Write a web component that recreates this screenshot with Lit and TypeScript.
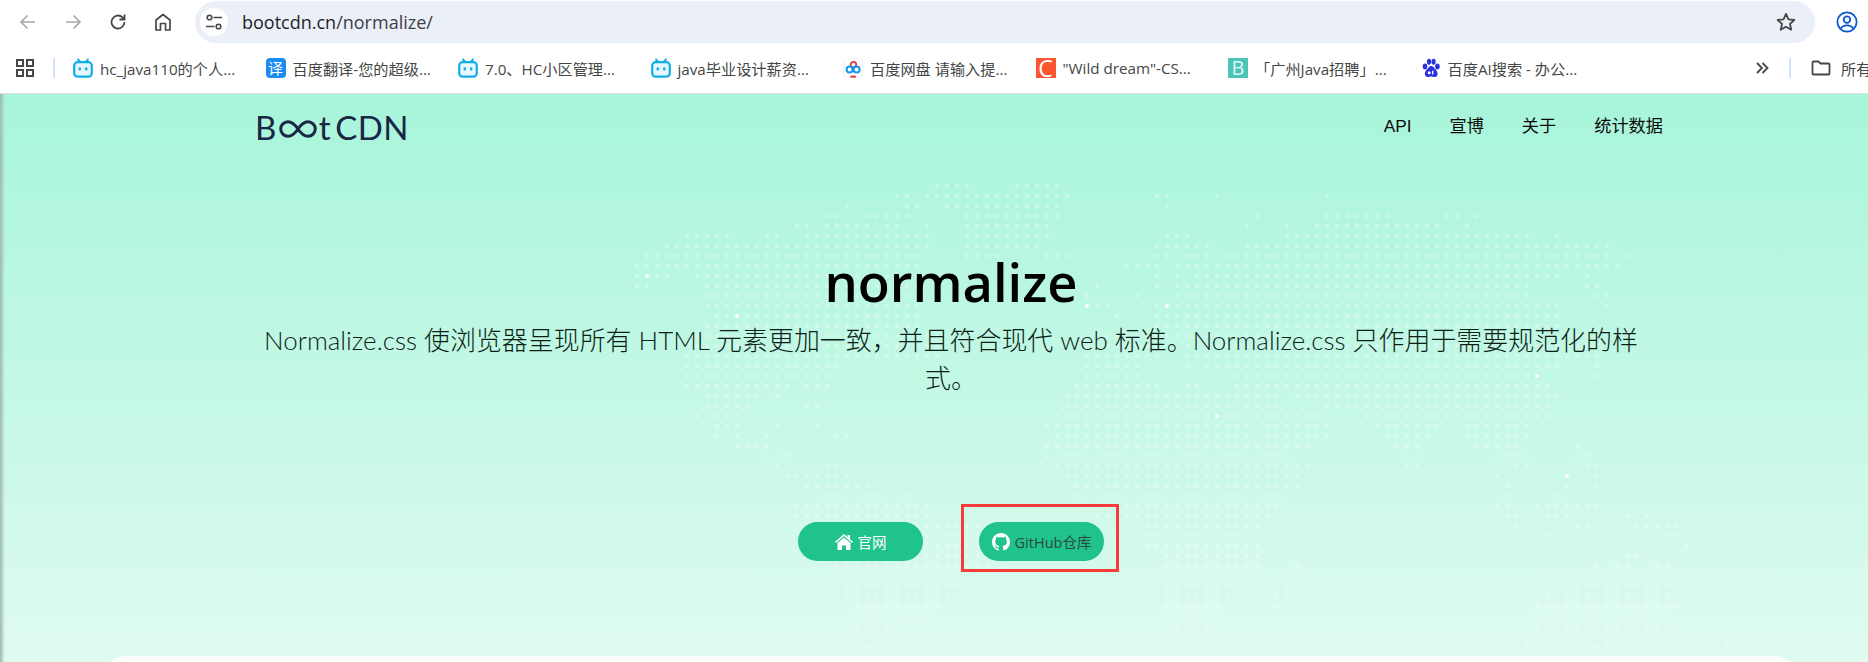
import { LitElement, html, css, svg } from "lit";
import { customElement } from "lit/decorators.js";

const MAP: string[] = [
  "937-967 1017-1057",
  "897-907 927-1067 1157-1167 1217 1327",
  "847 907-917 947-1057 1167",
  "827-837 867-907 967-1057 1257 1327-1387 1447-1457 1477",
  "797-807 827-847 857-867 887-897 927 967-1047 1247 1287 1317-1437 1467",
  "687-727 767-777 807-827 837-847 857-927 967-1047 1167-1187 1287-1527 1557",
  "667-927 967-1037 1157-1207 1247-1607",
  "647-917 967-997 1047-1067 1157-1167 1187-1207 1227-1607 1627",
  "637-917 1127-1157 1177-1617",
  "637-667 697-917 1157 1177 1197-1557 1587",
  "637-647 707-917 1097 1157 1177-1527 1587-1597",
  "707-917 1087 1137 1177-1527 1597-1607",
  "707-917 1087-1107 1157-1167 1177-1557 1607",
  "717-917 1117 1157-1557",
  "707-917 1157-1557",
  "697-937 1100-1597",
  "687-937 1087-1157 1187-1597",
  "687-937 1087-1157 1187-1597",
  "687-837 1087-1137 1187 1207-1557 1597",
  "687-827 1087-1137 1237-1537 1597",
  "687-787 807-827 1077-1157 1187-1197 1237-1547",
  "707-757 777 1067-1277 1297-1557",
  "707-747 807-817 1067-1227 1247-1277 1327-1547",
  "697 717-737 1057-1237 1257-1317 1367-1547",
  "717-737 777 817 1047-1247 1267-1327 1377-1437 1467-1527",
  "717 737 767 837-847 1057-1247 1267-1327 1387-1427 1467-1527",
  "737-767 1047-1307 1397-1417 1477-1517 1577",
  "767-787 1047-1287 1407-1417 1497-1527 1577-1587",
  "777 827-837 1057-1307 1407-1417 1517-1527 1587-1597",
  "787-847 1067-1297 1497 1567 1597",
  "807-867 1077-1297 1507 1567 1597",
  "817-907 1077-1287 1497-1507 1557-1567",
  "797-927 1087-1277 1497-1507 1537-1597",
  "797-927 1097-1267 1507-1517 1547-1567 1627 1647",
  "807-1037 1147-1257 1517 1577-1587 1637-1677",
  "817-1017 1147-1257 1527-1547 1657-1677",
  "817-1017 1147-1257 1687",
  "837-987 1167-1257 1627-1637",
  "837-987 1167-1257 1297 1597 1617-1627 1657-1667",
  "837-957 1167-1227 1287-1297 1587-1637 1657-1667",
  "847-957 1167-1227 1287 1577-1667",
  "847-947 1167-1227 1277-1287 1547-1667",
  "857-937 1167-1217 1277 1537-1677",
  "857-927 1167-1217 1537-1667",
  "857-887 1177-1207 1537-1667",
  "857-877 1177-1197 1527-1567 1597-1637 1727",
  "857-867 1527 1597-1617 1727",
];
const BRIGHT = new Set(["647,9", "737,13", "1087,12", "1167,12", "1217,23", "1537,19", "1567,29"]);

function mapDots() {
  const out: unknown[] = [];
  MAP.forEach((row, k) => {
    for (const run of row.split(" ")) {
      const [a, b] = run.split("-").map(Number);
      const hi = b ?? a;
      const i0 = Math.round((a - 637) / 10);
      const i1 = Math.round((hi - 637) / 10);
      for (let i = i0; i <= i1; i++) {
        const x = 637 + i * 10;
        const bright = BRIGHT.has(`${x},${k}`);
        out.push(
          svg`<circle cx=${x} cy=${186 + k * 10} r=${bright ? 2 : 2.2} fill="#fff" fill-opacity=${bright ? 0.95 : 0.28}></circle>`
        );
      }
    }
  });
  return out;
}

const tv = html`<svg class="fav" viewBox="0 0 20 20">
  <path d="M5 1.500 7.500 4M15 1.500 12.500 4" stroke="#13aee6" stroke-width="1.800" stroke-linecap="round" fill="none" />
  <rect x="1.200" y="4.200" width="17.600" height="14.400" rx="3.400" fill="#e6f7fd" stroke="#13aee6" stroke-width="2.200" />
  <rect x="5.600" y="9.200" width="2.400" height="3.200" rx="1" fill="#13aee6" />
  <rect x="12" y="9.200" width="2.400" height="3.200" rx="1" fill="#13aee6" />
</svg>`;

const translate = html`<span class="fav tile blue">译</span>`;
const pan = html`<svg class="fav" viewBox="0 0 20 20">
  <rect x=".5" y=".5" width="19" height="19" rx="3" fill="#fff" stroke="#f0f0f0" />
  <circle cx="10.400" cy="6.600" r="2.800" fill="none" stroke="#e8383d" stroke-width="1.800" />
  <circle cx="6.600" cy="11.600" r="3" fill="none" stroke="#1296f0" stroke-width="2" />
  <circle cx="13.600" cy="11.600" r="3" fill="none" stroke="#1296f0" stroke-width="2" />
  <rect x="7.400" y="17.600" width="5.400" height="2" fill="#e8383d" />
</svg>`;
const csdn = html`<span class="fav tile red">C</span>`;
const boss = html`<span class="fav tile teal">B</span>`;
const paw = html`<svg class="fav" viewBox="0 0 20 20" fill="#2932e1">
  <ellipse cx="4" cy="8.400" rx="2.300" ry="3" />
  <ellipse cx="8" cy="3.800" rx="2.100" ry="3" />
  <ellipse cx="12.600" cy="3.800" rx="2.100" ry="3" />
  <ellipse cx="16.400" cy="8.400" rx="2.300" ry="3" />
  <path d="M10.200 8c-2.400 0-3.200 2.800-5 4.200C3.400 13.800 3 19 7 19c1.600 0 2-.6 3.200-.6s1.800.6 3.400.6c4 0 3.400-5.200 1.600-6.800C13.400 10.800 12.600 8 10.200 8Z" />
  <circle cx="8.200" cy="14.800" r="1.500" fill="#fff" />
  <rect x="11" y="12.800" width="1.400" height="3.600" fill="#fff" />
</svg>`;

const BOOKMARKS = [
  { icon: tv, text: "hc_java110的个人..." },
  { icon: translate, text: "百度翻译-您的超级..." },
  { icon: tv, text: "7.0、HC小区管理..." },
  { icon: tv, text: "java毕业设计薪资..." },
  { icon: pan, text: "百度网盘 请输入提..." },
  { icon: csdn, text: "\"Wild dream\"-CS..." },
  { icon: boss, text: "「广州Java招聘」..." },
  { icon: paw, text: "百度AI搜索 - 办公..." },
];

@customElement("app-root")
export class AppRoot extends LitElement {
  static styles = css`
    :host {
      display: block;
      height: 662px;
      overflow: hidden;
      position: relative;
      background: #fff;
      font-family: "Open Sans", "Noto Sans CJK SC", sans-serif;
    }
    .toolbar {
      height: 43px;
      display: flex;
      align-items: center;
      box-sizing: border-box;
      padding-top: 1px;
    }
    .navbtn {
      width: 45px;
      display: flex;
      justify-content: center;
      flex: none;
    }
    .navbtns {
      display: flex;
      flex: none;
      padding-left: 5px;
      width: 195px;
      box-sizing: border-box;
    }
    .omni {
      width: 1620px;
      height: 42px;
      flex: none;
      border-radius: 21px;
      background: #ebeff8;
      display: flex;
      align-items: center;
      padding: 0 18px 0 5px;
      box-sizing: border-box;
    }
    .tune {
      width: 28px;
      height: 28px;
      border-radius: 50%;
      background: #fff;
      display: flex;
      align-items: center;
      justify-content: center;
      flex: none;
      margin-right: 14px;
    }
    .url {
      font-family: "Open Sans", sans-serif;
      font-size: 18px;
      color: #1f1f1f;
      flex: 1;
    }
    .url .rest {
      color: #3c3f44;
    }
    .avatar {
      margin-left: 21px;
      display: flex;
    }
    .bookmarks {
      height: 50px;
      border-bottom: 1px solid #e2e2e2;
      display: flex;
      align-items: center;
      box-sizing: content-box;
      white-space: nowrap;
      overflow: hidden;
    }
    .apps {
      margin-left: 16px;
      width: 37px;
      flex: none;
      display: flex;
    }
    .sep {
      width: 2px;
      height: 20px;
      background: #d3e3fd;
      flex: none;
    }
    .more-sep {
      margin-left: 19px;
    }
    .marks {
      display: flex;
      margin-left: 18px;
      flex: none;
    }
    .mark {
      width: 192.500px;
      flex: none;
      display: flex;
      align-items: center;
      gap: 7px;
      font-size: 15.200px;
      color: #444746;
      font-family: "Open Sans", "Noto Sans CJK SC", sans-serif;
    }
    .fav {
      width: 20px;
      height: 20px;
      flex: none;
    }
    .tile {
      display: flex;
      align-items: center;
      justify-content: center;
      color: #fff;
      font-size: 15px;
      line-height: 20px;
      border-radius: 4px;
    }
    .blue {
      background: #1b8cf2;
    }
    .red {
      background: #fc5531;
      font-size: 23px;
      border-radius: 0;
    }
    .teal {
      background: #4cc4b8;
      color: #dff7f3;
      border-radius: 0;
      font-size: 20px;
    }
    .more {
      display: flex;
      align-items: center;
      flex: none;
      margin-left: 141px;
    }
    .folder {
      display: flex;
      align-items: center;
      margin-left: 20px;
      gap: 10px;
      font-size: 15.200px;
      color: #444746;
      flex: none;
    }
    .page {
      position: relative;
      height: 568px;
      background: linear-gradient(180deg, #a7f5da 0%, #dffbf0 100%);
      overflow: hidden;
    }
    .edge {
      position: absolute;
      left: 0;
      top: 0;
      bottom: 0;
      width: 5px;
      background: linear-gradient(90deg, #9fb8af, rgba(159, 184, 175, 0));
    }
    .map {
      position: absolute;
      left: 0;
      top: -94px;
      width: 1868px;
      height: 662px;
    }
    .content {
      position: relative;
      display: flex;
      flex-direction: column;
    }
    .head {
      display: flex;
      justify-content: space-between;
      align-items: center;
      height: 64px;
      padding: 0 205px 0 255px;
    }
    .logo {
      display: flex;
      align-items: center;
      font-family: "Lato", sans-serif;
      font-size: 33px;
      line-height: 40px;
      color: #1a2744;
      letter-spacing: 0.5px;
      padding-top: 1px;
    }
    .logo svg {
      margin: 5px 1px 0 1px;
    }
    .logo .t {
      margin-right: 4px;
    }
    .links {
      display: flex;
      align-items: baseline;
      gap: 38px;
      font-size: 17.200px;
      line-height: 24px;
      color: #0a0a0a;
      font-family: "Liberation Sans", "Noto Sans CJK SC", sans-serif;
      margin-top: -1px;
    }
    .hero {
      display: flex;
      flex-direction: column;
      align-items: center;
      padding-left: 34px;
    }
    h1 {
      margin: 88px 0 0;
      font-size: 52.500px;
      line-height: 72px;
      font-weight: 600;
      color: #000;
    }
    .lead {
      margin: 3px 0 0;
      width: 1384px;
      text-align: center;
      font-size: 25.950px;
      line-height: 38px;
      font-weight: 300;
      color: #0c1f18;
      font-family: "Lato", "Noto Sans CJK SC", sans-serif;
    }
    .btns {
      display: flex;
      gap: 56px;
      margin-top: 125px;
    }
    .btn {
      width: 125px;
      height: 39px;
      border-radius: 20px;
      background: #20c38b;
      display: flex;
      align-items: center;
      justify-content: center;
      gap: 5px;
      font-size: 14.500px;
      color: #fff;
      position: relative;
    }
    .btn.dark {
      color: #2b4a44;
    }
    .mark-box {
      position: absolute;
      left: -18px;
      top: -18px;
      right: -15px;
      bottom: -11px;
      border: 3.500px solid #f83a3a;
    }
    .panel {
      margin: 95px 0 0 96px;
      width: 1708px;
      height: 60px;
      background: #fff;
      border-radius: 32px 32px 0 0;
    }
  `;

  render() {
    return html`
      <div class="toolbar">
        <div class="navbtns">
          <span class="navbtn"><svg width="20" height="20" viewBox="0 0 20 20" fill="none" stroke="#a8a8a8" stroke-width="1.600"><path d="M17 10H3.500M9.500 3.500 3 10l6.500 6.500" /></svg></span>
          <span class="navbtn"><svg width="20" height="20" viewBox="0 0 20 20" fill="none" stroke="#a8a8a8" stroke-width="1.600"><path d="M3 10h13.500M10.500 3.500 17 10l-6.500 6.500" /></svg></span>
          <span class="navbtn"><svg width="20" height="20" viewBox="0 0 20 20" fill="none" stroke="#474747" stroke-width="1.800"><path d="M16.500 10a6.500 6.500 0 1 1-2-4.700L16.500 7.300M16.500 2.500v5h-5" /></svg></span>
          <span class="navbtn"><svg width="20" height="20" viewBox="0 0 20 20" fill="none" stroke="#474747" stroke-width="1.700"><path d="M3 18V8l7-5.500L17 8v10h-4.500v-6.500h-5V18Z" stroke-linejoin="round" /></svg></span>
        </div>
        <div class="omni">
          <span class="tune"><svg width="20" height="20" viewBox="0 0 20 20" fill="none" stroke="#474747" stroke-width="1.600"><circle cx="5.500" cy="5.500" r="2.300" /><path d="M9.500 5.500H18M2 14.500h8.500" /><circle cx="14.500" cy="14.500" r="2.300" /></svg></span>
          <span class="url">bootcdn.cn<span class="rest">/normalize/</span></span>
          <svg width="22" height="22" viewBox="0 0 24 24" fill="none" stroke="#474747" stroke-width="2"><path d="m12 3.200 2.700 5.900 6.400.7-4.800 4.300 1.400 6.300L12 17.200l-5.700 3.200 1.400-6.300-4.800-4.300 6.400-.7Z" stroke-linejoin="round" /></svg>
        </div>
        <span class="avatar"><svg width="22" height="22" viewBox="0 0 22 22" fill="none" stroke="#0b57d0" stroke-width="1.800"><circle cx="11" cy="11" r="9.600" /><circle cx="11" cy="8.600" r="3.300" /><path d="M4.700 17.600c1.500-2.500 3.700-3.300 6.300-3.300s4.800.8 6.300 3.300" /></svg></span>
      </div>
      <div class="bookmarks">
        <span class="apps"><svg width="18" height="18" viewBox="0 0 18 18" fill="none" stroke="#474747" stroke-width="2"><rect x="1" y="1" width="6" height="6" /><rect x="11" y="1" width="6" height="6" /><rect x="1" y="11" width="6" height="6" /><rect x="11" y="11" width="6" height="6" /></svg></span>
        <span class="sep"></span>
        <div class="marks">
          ${BOOKMARKS.map((b) => html`<div class="mark">${b.icon}<span>${b.text}</span></div>`)}
        </div>
        <div class="more">
          <svg width="16" height="16" viewBox="0 0 16 16" fill="none" stroke="#474747" stroke-width="1.800"><path d="m3 3 5 5-5 5M8.500 3l5 5-5 5" /></svg>
          <span class="sep more-sep"></span>
        </div>
        <div class="folder">
          <svg width="20" height="18" viewBox="0 0 20 18" fill="none" stroke="#474747" stroke-width="1.800"><path d="M1.500 3.500a1 1 0 0 1 1-1h5l2 2h8a1 1 0 0 1 1 1v9a1 1 0 0 1-1 1h-15a1 1 0 0 1-1-1Z" /></svg>
          <span>所有</span>
        </div>
      </div>
      <div class="page">
        <svg class="map" viewBox="0 0 1868 662">${mapDots()}</svg>
        <span class="edge"></span>
        <div class="content">
          <header class="head">
            <div class="logo">
              <span>B</span>
              <svg width="40" height="20" viewBox="0 0 42 22" fill="none" stroke="#1a2744" stroke-width="3.300"><path d="M21 11C17 5 14 3 10 3a8 8 0 0 0 0 16c4 0 7-2 11-8s7-8 11-8a8 8 0 0 1 0 16c-4 0-7-2-11-8Z" /></svg>
              <span class="t">t</span><span>CDN</span>
            </div>
            <nav class="links"><span>API</span><span>宣博</span><span>关于</span><span>统计数据</span></nav>
          </header>
          <section class="hero">
            <h1>normalize</h1>
            <p class="lead">Normalize.css 使浏览器呈现所有 HTML 元素更加一致，并且符合现代 web 标准。Normalize.css 只作用于需要规范化的样式。</p>
            <div class="btns">
              <a class="btn"><svg width="18" height="16" viewBox="0 0 18 16" fill="#fff"><path d="M9 0 0 7.800l1 1.100L9 2l8 6.900 1-1.100-3-2.600V1h-2.500v2.100Z" /><path d="M9 3.500 2.500 9v7H7v-4.500h4V16h4.500V9Z" /></svg>官网</a>
              <a class="btn dark"><svg width="18" height="18" viewBox="0 0 16 16" fill="#fff"><path d="M8 0C3.580 0 0 3.580 0 8c0 3.540 2.290 6.530 5.470 7.590.4.070.55-.17.550-.38 0-.19-.01-.82-.01-1.490-2.010.37-2.530-.49-2.690-.94-.09-.23-.48-.94-.82-1.130-.28-.15-.68-.52-.01-.53.630-.01 1.080.58 1.230.82.720 1.210 1.870.87 2.330.66.070-.52.280-.87.510-1.070-1.780-.2-3.640-.89-3.640-3.950 0-.87.310-1.590.820-2.150-.08-.2-.36-1.020.08-2.120 0 0 .67-.21 2.200.82.640-.18 1.320-.27 2-.27s1.360.09 2 .27c1.530-1.040 2.200-.82 2.200-.82.440 1.100.16 1.920.08 2.120.51.560.82 1.270.82 2.150 0 3.070-1.870 3.750-3.650 3.950.29.250.54.730.54 1.480 0 1.070-.01 1.930-.01 2.200 0 .21.150.46.550.38A8.010 8.010 0 0 0 16 8c0-4.420-3.580-8-8-8Z" /></svg>GitHub仓库<span class="mark-box"></span></a>
            </div>
          </section>
          <div class="panel"></div>
        </div>
      </div>
    `;
  }
}
